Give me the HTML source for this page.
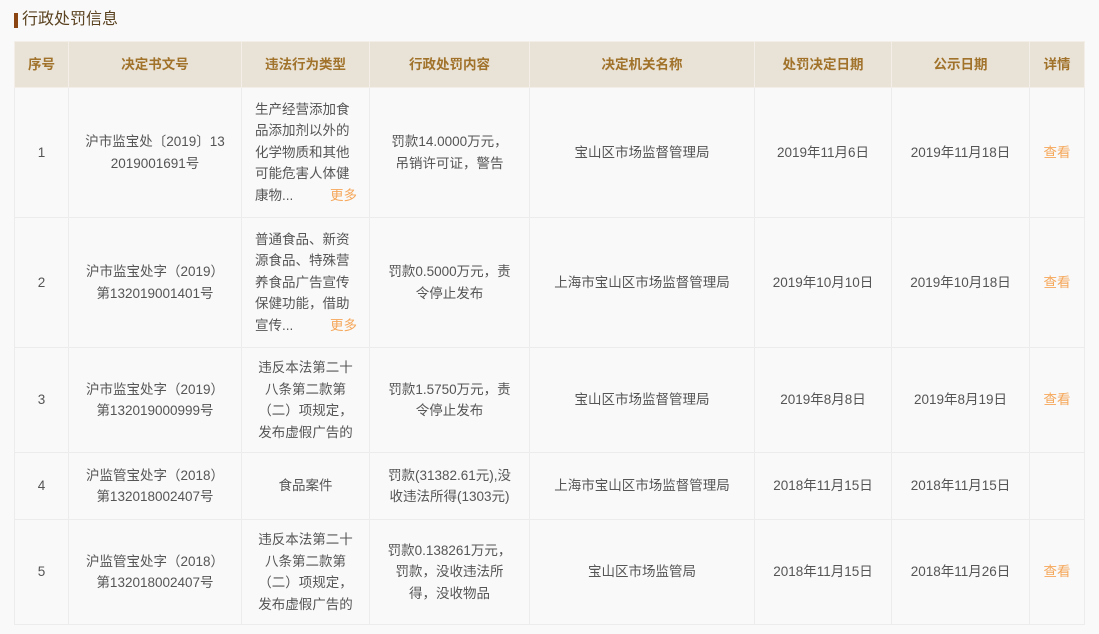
<!DOCTYPE html>
<html><head><meta charset="utf-8"><style>
body{margin:0;background:#f9f9f9;font-family:"Liberation Sans","Noto Sans CJK SC",sans-serif;color:#555;width:1099px;height:634px;overflow:hidden}
.title{position:absolute;left:14px;top:10px;font-size:16px;color:#5a4220;line-height:20px;padding-left:8px}
.title:before{content:"";position:absolute;left:0;top:3px;width:4px;height:15px;background:#8b4513}
table{position:absolute;left:14px;top:41px;border-collapse:collapse;table-layout:fixed;width:1070px}
td,th{border:1px solid #ececec;text-align:center;font-size:13.5px;line-height:21.5px;padding:0 6px;vertical-align:middle}
th{background:#e9e2d6;color:#a0722a;font-weight:bold;height:45px;border-color:#f3efe8}
.v{text-align:left;padding:0 12px 0 13px;font-size:13.5px}
.more{float:right;color:#f5a75a}
a{color:#f5a75a;text-decoration:none}
</style></head><body>
<div class="title">行政处罚信息</div>
<table>
<colgroup><col style="width:54px"><col style="width:173px"><col style="width:128px"><col style="width:160px"><col style="width:225px"><col style="width:137px"><col style="width:138px"><col style="width:55px"></colgroup>
<tr><th>序号</th><th>决定书文号</th><th>违法行为类型</th><th>行政处罚内容</th><th>决定机关名称</th><th>处罚决定日期</th><th>公示日期</th><th>详情</th></tr>
<tr style="height:130px"><td>1</td><td>沪市监宝处〔2019〕13<br>2019001691号</td><td class="v">生产经营添加食品添加剂以外的化学物质和其他可能危害人体健康物...<span class="more">更多</span></td><td>罚款14.0000万元，<br>吊销许可证，警告</td><td>宝山区市场监督管理局</td><td>2019年11月6日</td><td>2019年11月18日</td><td><a>查看</a></td></tr>
<tr style="height:130px"><td>2</td><td>沪市监宝处字（2019）<br>第132019001401号</td><td class="v">普通食品、新资源食品、特殊营养食品广告宣传保健功能，借助宣传...<span class="more">更多</span></td><td>罚款0.5000万元，责<br>令停止发布</td><td>上海市宝山区市场监督管理局</td><td>2019年10月10日</td><td>2019年10月18日</td><td><a>查看</a></td></tr>
<tr style="height:105px"><td>3</td><td>沪市监宝处字（2019）<br>第132019000999号</td><td>违反本法第二十<br>八条第二款第<br>（二）项规定，<br>发布虚假广告的</td><td>罚款1.5750万元，责<br>令停止发布</td><td>宝山区市场监督管理局</td><td>2019年8月8日</td><td>2019年8月19日</td><td><a>查看</a></td></tr>
<tr style="height:67px"><td>4</td><td>沪监管宝处字（2018）<br>第132018002407号</td><td>食品案件</td><td>罚款(31382.61元),没<br>收违法所得(1303元)</td><td>上海市宝山区市场监督管理局</td><td>2018年11月15日</td><td>2018年11月15日</td><td></td></tr>
<tr style="height:105px"><td>5</td><td>沪监管宝处字（2018）<br>第132018002407号</td><td>违反本法第二十<br>八条第二款第<br>（二）项规定，<br>发布虚假广告的</td><td>罚款0.138261万元，<br>罚款，没收违法所<br>得，没收物品</td><td>宝山区市场监管局</td><td>2018年11月15日</td><td>2018年11月26日</td><td><a>查看</a></td></tr>
</table>
</body></html>
